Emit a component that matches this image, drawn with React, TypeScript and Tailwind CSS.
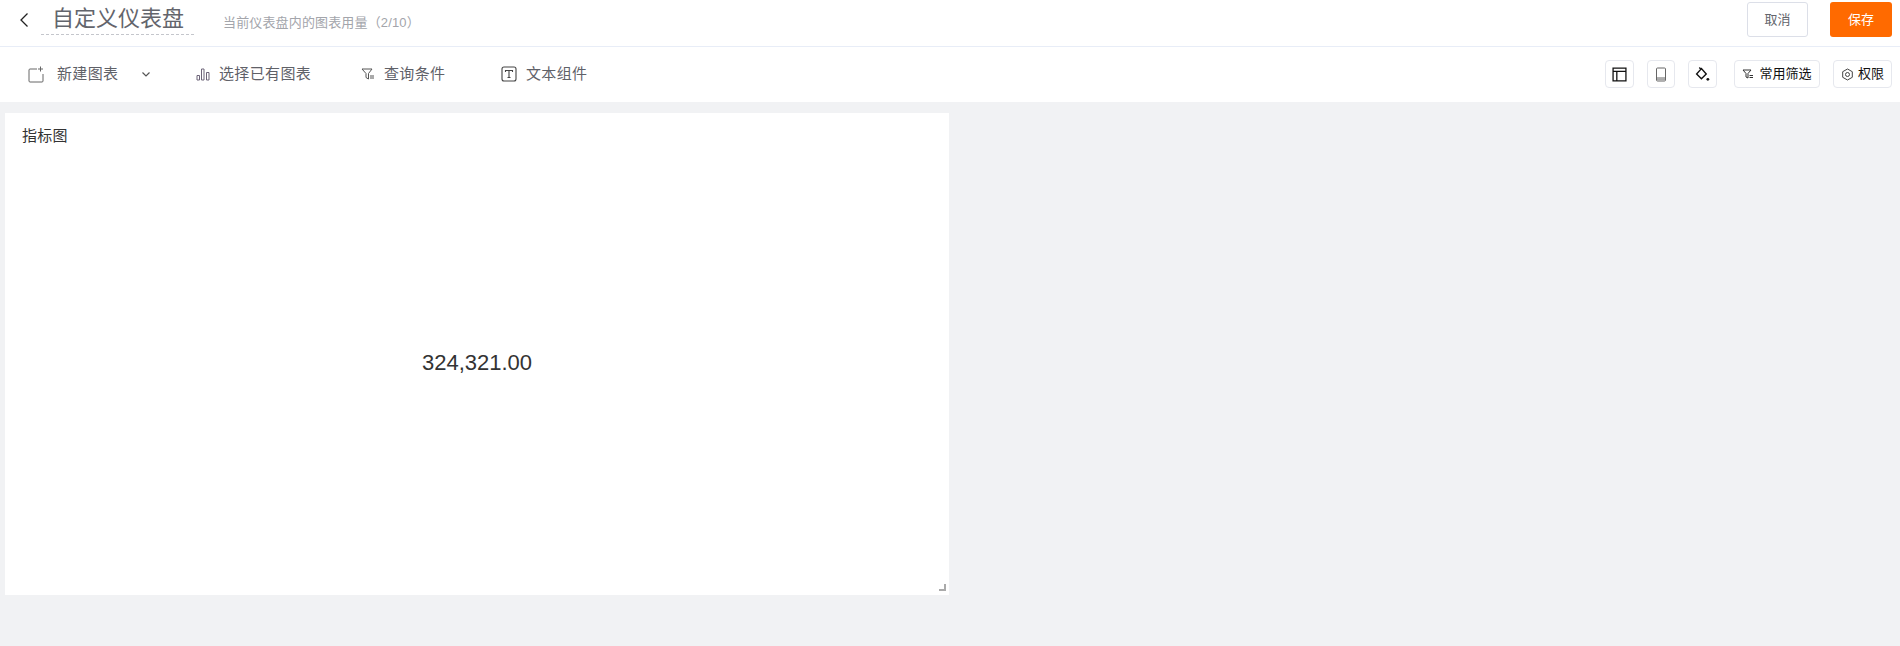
const font = "font-['Liberation_Sans','Noto_Sans_CJK_SC',sans-serif]";

function ToolItem({ icon, label, className }: { icon: React.ReactNode; label: string; className: string }) {
  return (
    <div className={`flex items-center ${className}`}>
      {icon}
      <span className="text-[15px] tracking-[0.35px] text-[#5f6168]">{label}</span>
    </div>
  );
}

function IconButton({ children, className }: { children: React.ReactNode; className: string }) {
  return (
    <div className={`flex h-7 items-center justify-center rounded-[4px] border border-[#e6e8ee] bg-white ${className}`}>
      {children}
    </div>
  );
}

export default function App() {
  return (
    <div className={`flex h-[646px] w-[1900px] flex-col bg-[#f1f2f4] ${font}`}>
      <div className="flex h-[47px] shrink-0 items-start border-b border-[#e8edf7] bg-white">
        <svg className="ml-[19px] mt-[12px] h-[16px] w-[10px]" viewBox="0 0 10 16" fill="none" stroke="#222" strokeWidth="1.3">
          <path d="M8.5 1.5 2 8l6.500 6.500" />
        </svg>
        <div className="ml-[12px] mt-[5px] h-[30px] w-[153px] border-b border-dashed border-[#c4c6cc] pl-[11px] text-[22px] leading-[28px] text-[#63656c]">
          自定义仪表盘
        </div>
        <div className="ml-[29px] mt-[15px] text-[13px] leading-[16px] tracking-[0.15px] text-[#a3a5ab]">
          当前仪表盘内的图表用量（2/10）
        </div>
        <div className="ml-auto mr-[8px] mt-[2px] flex items-center gap-[22px]">
          <div className="flex h-[35px] w-[61px] items-center justify-center rounded-[3px] border border-[#dcdfe8] text-[13px] text-[#63656c]">
            取消
          </div>
          <div className="flex h-[35px] w-[62px] items-center justify-center rounded-[3px] bg-[#ff6a00] text-[13px] text-white">
            保存
          </div>
        </div>
      </div>

      <div className="flex h-[55px] shrink-0 items-center bg-white pb-[1px] pr-[8px]">
        <ToolItem
          className="ml-[28px] w-[168px]"
          label="新建图表"
          icon={
            <svg className="mr-[13px] h-[17px] w-[16px]" viewBox="0 0 16 17" fill="none" stroke="#666" strokeWidth="1">
              <path d="M9 3H2a1 1 0 0 0-1 1v11a1 1 0 0 0 1 1h12a1 1 0 0 0 1-1V8M12.500 0.500v5M10 3h5" />
            </svg>
          }
        />
        <svg className="-ml-[55px] mr-[45px] h-[10px] w-[10px]" viewBox="0 0 10 10" fill="none" stroke="#555" strokeWidth="1.2">
          <path d="M1.500 3.500 5 7l3.500-3.500" />
        </svg>
        <ToolItem
          className="w-[165px]"
          label="选择已有图表"
          icon={
            <svg className="mr-[9px] h-[14px] w-[14px]" viewBox="0 0 14 14" fill="none" stroke="#6d6478" strokeWidth="1">
              <path d="M1 8.500h2.500v4.500H1zM5.500 2h2.500v11H5.500zM10.500 5.500H13v7.500h-2.500z" />
            </svg>
          }
        />
        <ToolItem
          className="w-[140px]"
          label="查询条件"
          icon={
            <svg className="mr-[9px] h-[14px] w-[14px]" viewBox="0 0 14 14" fill="none" stroke="#555" strokeWidth="1">
              <path d="M1 2h10L7.500 6.500V12L5 10.500v-4zM9 9h4M9 11h4" />
            </svg>
          }
        />
        <ToolItem
          className=""
          label="文本组件"
          icon={
            <svg className="mr-[9px] h-[16px] w-[16px]" viewBox="0 0 16 16" fill="none" stroke="#444" strokeWidth="1.100">
              <rect x="1" y="1" width="14" height="14" rx="2" />
              <path d="M4.500 6V4.500h7V6M8 4.500v7M6.500 11.500h3" />
            </svg>
          }
        />
        <div className="ml-auto flex items-center gap-[13px]">
          <IconButton className="w-[29px]">
            <svg className="h-[15px] w-[15px]" viewBox="0 0 14 14" fill="none" stroke="#111" strokeWidth="1.200">
              <path d="M1 1h12v12H1zM1 4h12M4.500 4v9" />
            </svg>
          </IconButton>
          <IconButton className="w-7">
            <svg className="h-[15px] w-[12px]" viewBox="0 0 12 14" fill="none" stroke="#666" strokeWidth="1">
              <rect x="1.500" y="0.500" width="9" height="13" rx="1" />
              <path d="M2 10.500h8" />
              <path d="M2 11h8v2H2z" fill="#aaa" stroke="none" />
            </svg>
          </IconButton>
          <IconButton className="mr-[4px] w-[29px]">
            <svg className="h-[15px] w-[15px]" viewBox="0 0 14 14" fill="none" stroke="#111" strokeWidth="1.300">
              <path d="M6 1.500 1.500 6.500 6 11 10.500 6.500zM4 0.500 6 2.500" />
              <circle cx="12" cy="11.500" r="1.300" fill="#111" stroke="none" />
            </svg>
          </IconButton>
          <div className="flex h-7 w-[86px] items-center justify-center gap-[5px] rounded-[4px] border border-[#e6e8ee] text-[13px] text-[#111]">
            <svg className="h-[12px] w-[12px]" viewBox="0 0 12 12" fill="none" stroke="#333" strokeWidth="1">
              <path d="M1 2h8L6 5.500V10L4 9V5.500zM7.500 7.500H11M7.500 9.500H11" />
            </svg>
            常用筛选
          </div>
          <div className="flex h-7 w-[59px] items-center justify-center gap-[4px] rounded-[4px] border border-[#e6e8ee] text-[13px] text-[#111]">
            <svg className="h-[13px] w-[13px]" viewBox="0 0 13 13" fill="none" stroke="#444" strokeWidth="1">
              <path d="M6.500 1 11.300 3.700v5.600L6.500 12 1.700 9.300V3.700z" />
              <circle cx="6.500" cy="6.500" r="2" />
            </svg>
            权限
          </div>
        </div>
      </div>

      <div className="flex-1 pl-[5px] pt-[11px]">
        <div className="relative flex h-[482px] w-[944px] flex-col bg-white">
          <div className="pl-[17px] pt-[13px] text-[15px] leading-[20px] tracking-[0.3px] text-[#333]">指标图</div>
          <div className="flex flex-1 items-center justify-center pb-[16px] text-[22px] text-[#333]">324,321.00</div>
          <div className="absolute bottom-[4px] right-[3px] h-[7px] w-[7px] border-b-2 border-r-2 border-[#aaa]" />
        </div>
      </div>
    </div>
  );
}
